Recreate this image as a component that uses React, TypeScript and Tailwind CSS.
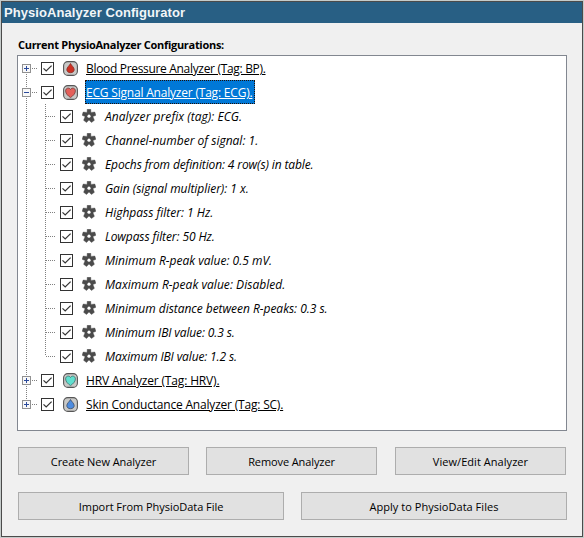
import React from "react";

type IconKind = "blood" | "ecg" | "hrv" | "skin";

function Check() {
  return (
    <svg width="13" height="13" viewBox="0 0 13 13" className="shrink-0">
      <rect x="0.5" y="0.5" width="12" height="12" fill="#fff" stroke="#333" />
      <path d="M2.5 6.3 5.2 9 10.6 3.6" fill="none" stroke="#333" strokeWidth="1.2" />
    </svg>
  );
}

function BadgeIcon({ kind }: { kind: IconKind }) {
  const heart =
    "M7.5 12.6C5 10.8 2.6 8.7 2.6 5.9 2.6 2.8 6.3 2.2 7.5 4.5 8.7 2.2 12.4 2.8 12.4 5.9 12.4 8.7 10 10.8 7.5 12.6Z";
  const drop = "M7.5 2.5C8.4 4.6 11.2 6.3 11.2 8.6 11.2 10.5 9.7 11.7 7.5 11.7 5.3 11.7 3.8 10.5 3.8 8.6 3.8 6.3 6.6 4.6 7.5 2.5Z";
  const fills = { blood: "#cc3022", ecg: "#e4605a", hrv: "#60dfcf", skin: "#4d8ce0" };
  const strokes = { blood: "#8a2c24", ecg: "#704040", hrv: "#3f6f6b", skin: "#3e4c64" };
  return (
    <svg width="15" height="15" viewBox="0 0 15 15" className="shrink-0">
      <rect x="0.6" y="0.6" width="13.8" height="13.8" rx="4.2" fill="#c9c9c7" stroke="#565656" strokeWidth="1.1" />
      <path
        d={kind === "ecg" || kind === "hrv" ? heart : drop}
        fill={fills[kind]}
        stroke={strokes[kind]}
        strokeWidth="0.8"
      />
    </svg>
  );
}

function Gear() {
  return (
    <svg width="14" height="14" viewBox="0 0 14 14" className="shrink-0">
      <path
        d="M5.2 0.3H8.8L8.9 3.4 12.8 3 13.9 6.3 10.9 7.6 12.4 11.3 9.5 13.5 7 11.1 4.5 13.5 1.6 11.3 3.1 7.6 0.1 6.3 1.2 3 5.1 3.4Z"
        fill="#4b4b4b"
        stroke="#4b4b4b"
        strokeWidth="0.4"
        strokeLinejoin="round"
      />
      <circle cx="7" cy="7.2" r="1.6" fill="#fff" />
    </svg>
  );
}

// Connector lines and the expander of a top-level row, on a 24px high strip.
function RootGutter({ open, first, last }: { open?: boolean; first?: boolean; last?: boolean }) {
  return (
    <svg width="23" height="24" viewBox="0 0 23 24" className="shrink-0" shapeRendering="crispEdges">
      <path
        d={first ? "M8.5 12V24" : last ? "M8.5 0V12" : "M8.5 0V24"}
        stroke="#808080"
        strokeDasharray="1 1"
      />
      <path d="M14 12.5H20" stroke="#808080" strokeDasharray="1 1" />
      <rect x="4.5" y="8.5" width="8" height="8" fill="#f8f8f8" stroke="#919191" />
      <path d={open ? "M6 12.5H11" : "M6 12.5H11M8.5 10V15"} stroke="#2b4a9b" />
    </svg>
  );
}

function ChildGutter({ last }: { last?: boolean }) {
  return (
    <svg width="42" height="24" viewBox="0 0 42 24" className="shrink-0" shapeRendering="crispEdges">
      <path d="M8.5 0V24" stroke="#808080" strokeDasharray="1 1" />
      <path d={last ? "M27.5 0V12" : "M27.5 0V24"} stroke="#808080" strokeDasharray="1 1" />
      <path d="M28 12.5H37" stroke="#808080" strokeDasharray="1 1" />
    </svg>
  );
}

interface RootProps {
  label: string;
  kind: IconKind;
  tracking: string;
  selected?: boolean;
  first?: boolean;
  last?: boolean;
}

function RootRow({ label, kind, tracking, selected, first, last }: RootProps) {
  return (
    <div className="flex h-6 items-center">
      <RootGutter open={selected} first={first} last={last} />
      <Check />
      <span className="mr-[7px] ml-[9px] flex">
        <BadgeIcon kind={kind} />
      </span>
      <span
        className={`flex h-6 items-center border border-dotted pt-[2px] whitespace-nowrap underline underline-offset-1 ${tracking} ${
          selected ? "w-[170px] border-[#201008] bg-[#0078d7] text-white" : "border-transparent"
        }`}
      >
        {label}
      </span>
    </div>
  );
}

const settings = [
  { label: "Analyzer prefix (tag): ECG.", tracking: "tracking-[0.05px]" },
  { label: "Channel-number of signal: 1.", tracking: "tracking-[0.01px]" },
  { label: "Epochs from definition: 4 row(s) in table.", tracking: "tracking-[-0.12px]" },
  { label: "Gain (signal multiplier): 1 x.", tracking: "tracking-[-0.04px]" },
  { label: "Highpass filter: 1 Hz.", tracking: "tracking-[0px]" },
  { label: "Lowpass filter: 50 Hz.", tracking: "tracking-[-0.09px]" },
  { label: "Minimum R-peak value: 0.5 mV.", tracking: "tracking-[0px]" },
  { label: "Maximum R-peak value: Disabled.", tracking: "tracking-[0.04px]" },
  { label: "Minimum distance between R-peaks: 0.3 s.", tracking: "tracking-[-0.03px]" },
  { label: "Minimum IBI value: 0.3 s.", tracking: "tracking-[-0.12px]" },
  { label: "Maximum IBI value: 1.2 s.", tracking: "tracking-[-0.14px]" },
];

function Button({ children, tracking }: { children: string; tracking: string }) {
  return (
    <button className={`h-7 flex-1 border border-[#adadad] bg-[#e1e1e1] pt-px text-[11px] leading-none whitespace-nowrap ${tracking}`}>
      {children}
    </button>
  );
}

export default function App() {
  return (
    <div className="h-[538px] w-[584px] bg-[#c5cbca] p-px font-['Open_Sans','Noto_Sans',sans-serif] text-black">
      <div className="flex h-[536px] flex-col border border-[#4b4b4b] bg-[#f0f0f0]">
        <header className="flex h-[21px] shrink-0 items-center bg-[#285f84] pl-[2px] font-['Liberation_Sans',sans-serif] text-[13px] leading-[19px] font-bold text-[#f2f6f8]">
          <h1 className="tracking-[0.07px]">PhysioAnalyzer Configurator</h1>
        </header>
        <main className="flex flex-col pl-[15px]">
          <h2 className="mt-[13px] ml-px h-[19px] text-[11px] leading-[18px] font-bold tracking-[-0.29px]">
            Current PhysioAnalyzer Configurations:
          </h2>
          <div className="h-[376px] w-[550px] border border-[#828790] bg-white text-[12px] leading-none">
            <RootRow first label="Blood Pressure Analyzer (Tag: BP)." kind="blood" tracking="tracking-[-0.32px]" />
            <RootRow selected label="ECG Signal Analyzer (Tag: ECG)." kind="ecg" tracking="tracking-[-0.2px]" />
            {settings.map((s, i) => (
              <div key={s.label} className="flex h-6 items-center">
                <ChildGutter last={i === settings.length - 1} />
                <Check />
                <span className="mr-[9px] ml-[9px] flex">
                  <Gear />
                </span>
                <span className={`pt-[2px] whitespace-nowrap italic ${s.tracking}`}>{s.label}</span>
              </div>
            ))}
            <RootRow label="HRV Analyzer (Tag: HRV)." kind="hrv" tracking="tracking-[-0.16px]" />
            <RootRow last label="Skin Conductance Analyzer (Tag: SC)." kind="skin" tracking="tracking-[-0.2px]" />
          </div>
          <div className="mt-4 ml-px grid w-[548px] grid-cols-[171px_171px_171px] gap-[17px]">
            <Button tracking="tracking-[-0.05px]">Create New Analyzer</Button>
            <Button tracking="tracking-[-0.1px]">Remove Analyzer</Button>
            <div className="ml-px flex w-[171px]">
              <Button tracking="tracking-[0.05px]">View/Edit Analyzer</Button>
            </div>
          </div>
          <div className="mt-[17px] ml-px flex w-[549px] gap-[17px]">
            <Button tracking="tracking-[-0.04px]">Import From PhysioData File</Button>
            <Button tracking="tracking-[0.03px]">Apply to PhysioData Files</Button>
          </div>
        </main>
      </div>
    </div>
  );
}
